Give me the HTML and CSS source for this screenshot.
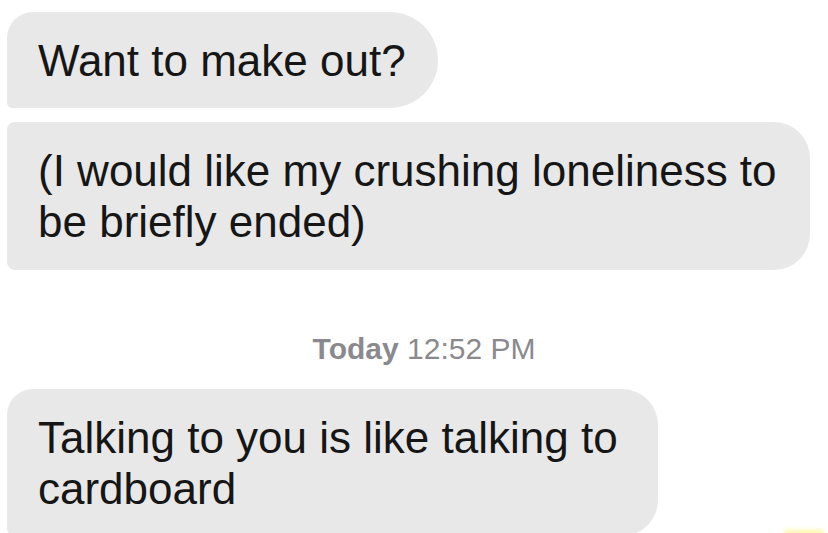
FILE: index.html
```html
<!DOCTYPE html>
<html lang="en">
<head>
<meta charset="utf-8">
<title>Messages</title>
<link rel="stylesheet" href="styles.css">
</head>
<body>
<main class="thread">
  <div class="bubble bubble-first">Want to make out?</div>
  <div class="bubble bubble-middle">(I would like my crushing loneliness to be briefly ended)</div>
  <div class="stamp"><span class="stamp-day">Today</span> 12:52 PM</div>
  <div class="bubble bubble-last">Talking to you is like talking to cardboard</div>
</main>
<div class="watermark"></div>
</body>
</html>
```
FILE: styles.css
```css
html, body {
  margin: 0;
  padding: 0;
  background: #ffffff;
  height: 100%;
  overflow: hidden;
}
.thread {
  display: flex;
  flex-direction: column;
  align-items: flex-start;
  padding: 12px 0 0 7px;
  font-family: "Liberation Sans", Arial, sans-serif;
}
.bubble {
  background: #e8e8e9;
  color: #161616;
  font-size: 44px;
  line-height: 51px;
  padding: 23px 30px 22px 31px;
  box-sizing: border-box;
}
.bubble-first {
  border-radius: 26px 48px 48px 5px;
  padding-right: 32px;
}
.bubble-middle {
  margin-top: 14px;
  width: 803px;
  border-radius: 8px 36px 36px 8px;
  padding-bottom: 23px;
}
.bubble-last {
  width: 651px;
  border-radius: 26px 36px 36px 8px;
}
.stamp {
  align-self: center;
  margin: 62px 0 23px 13px;
  font-size: 30px;
  line-height: 34px;
  color: #8a8a8e;
}
.stamp-day {
  font-weight: bold;
}
.watermark {
  position: absolute;
  right: 4px;
  bottom: -3px;
  width: 40px;
  height: 6px;
  border-radius: 3px;
  background: #fff6a8;
  filter: blur(2px);
}
```
